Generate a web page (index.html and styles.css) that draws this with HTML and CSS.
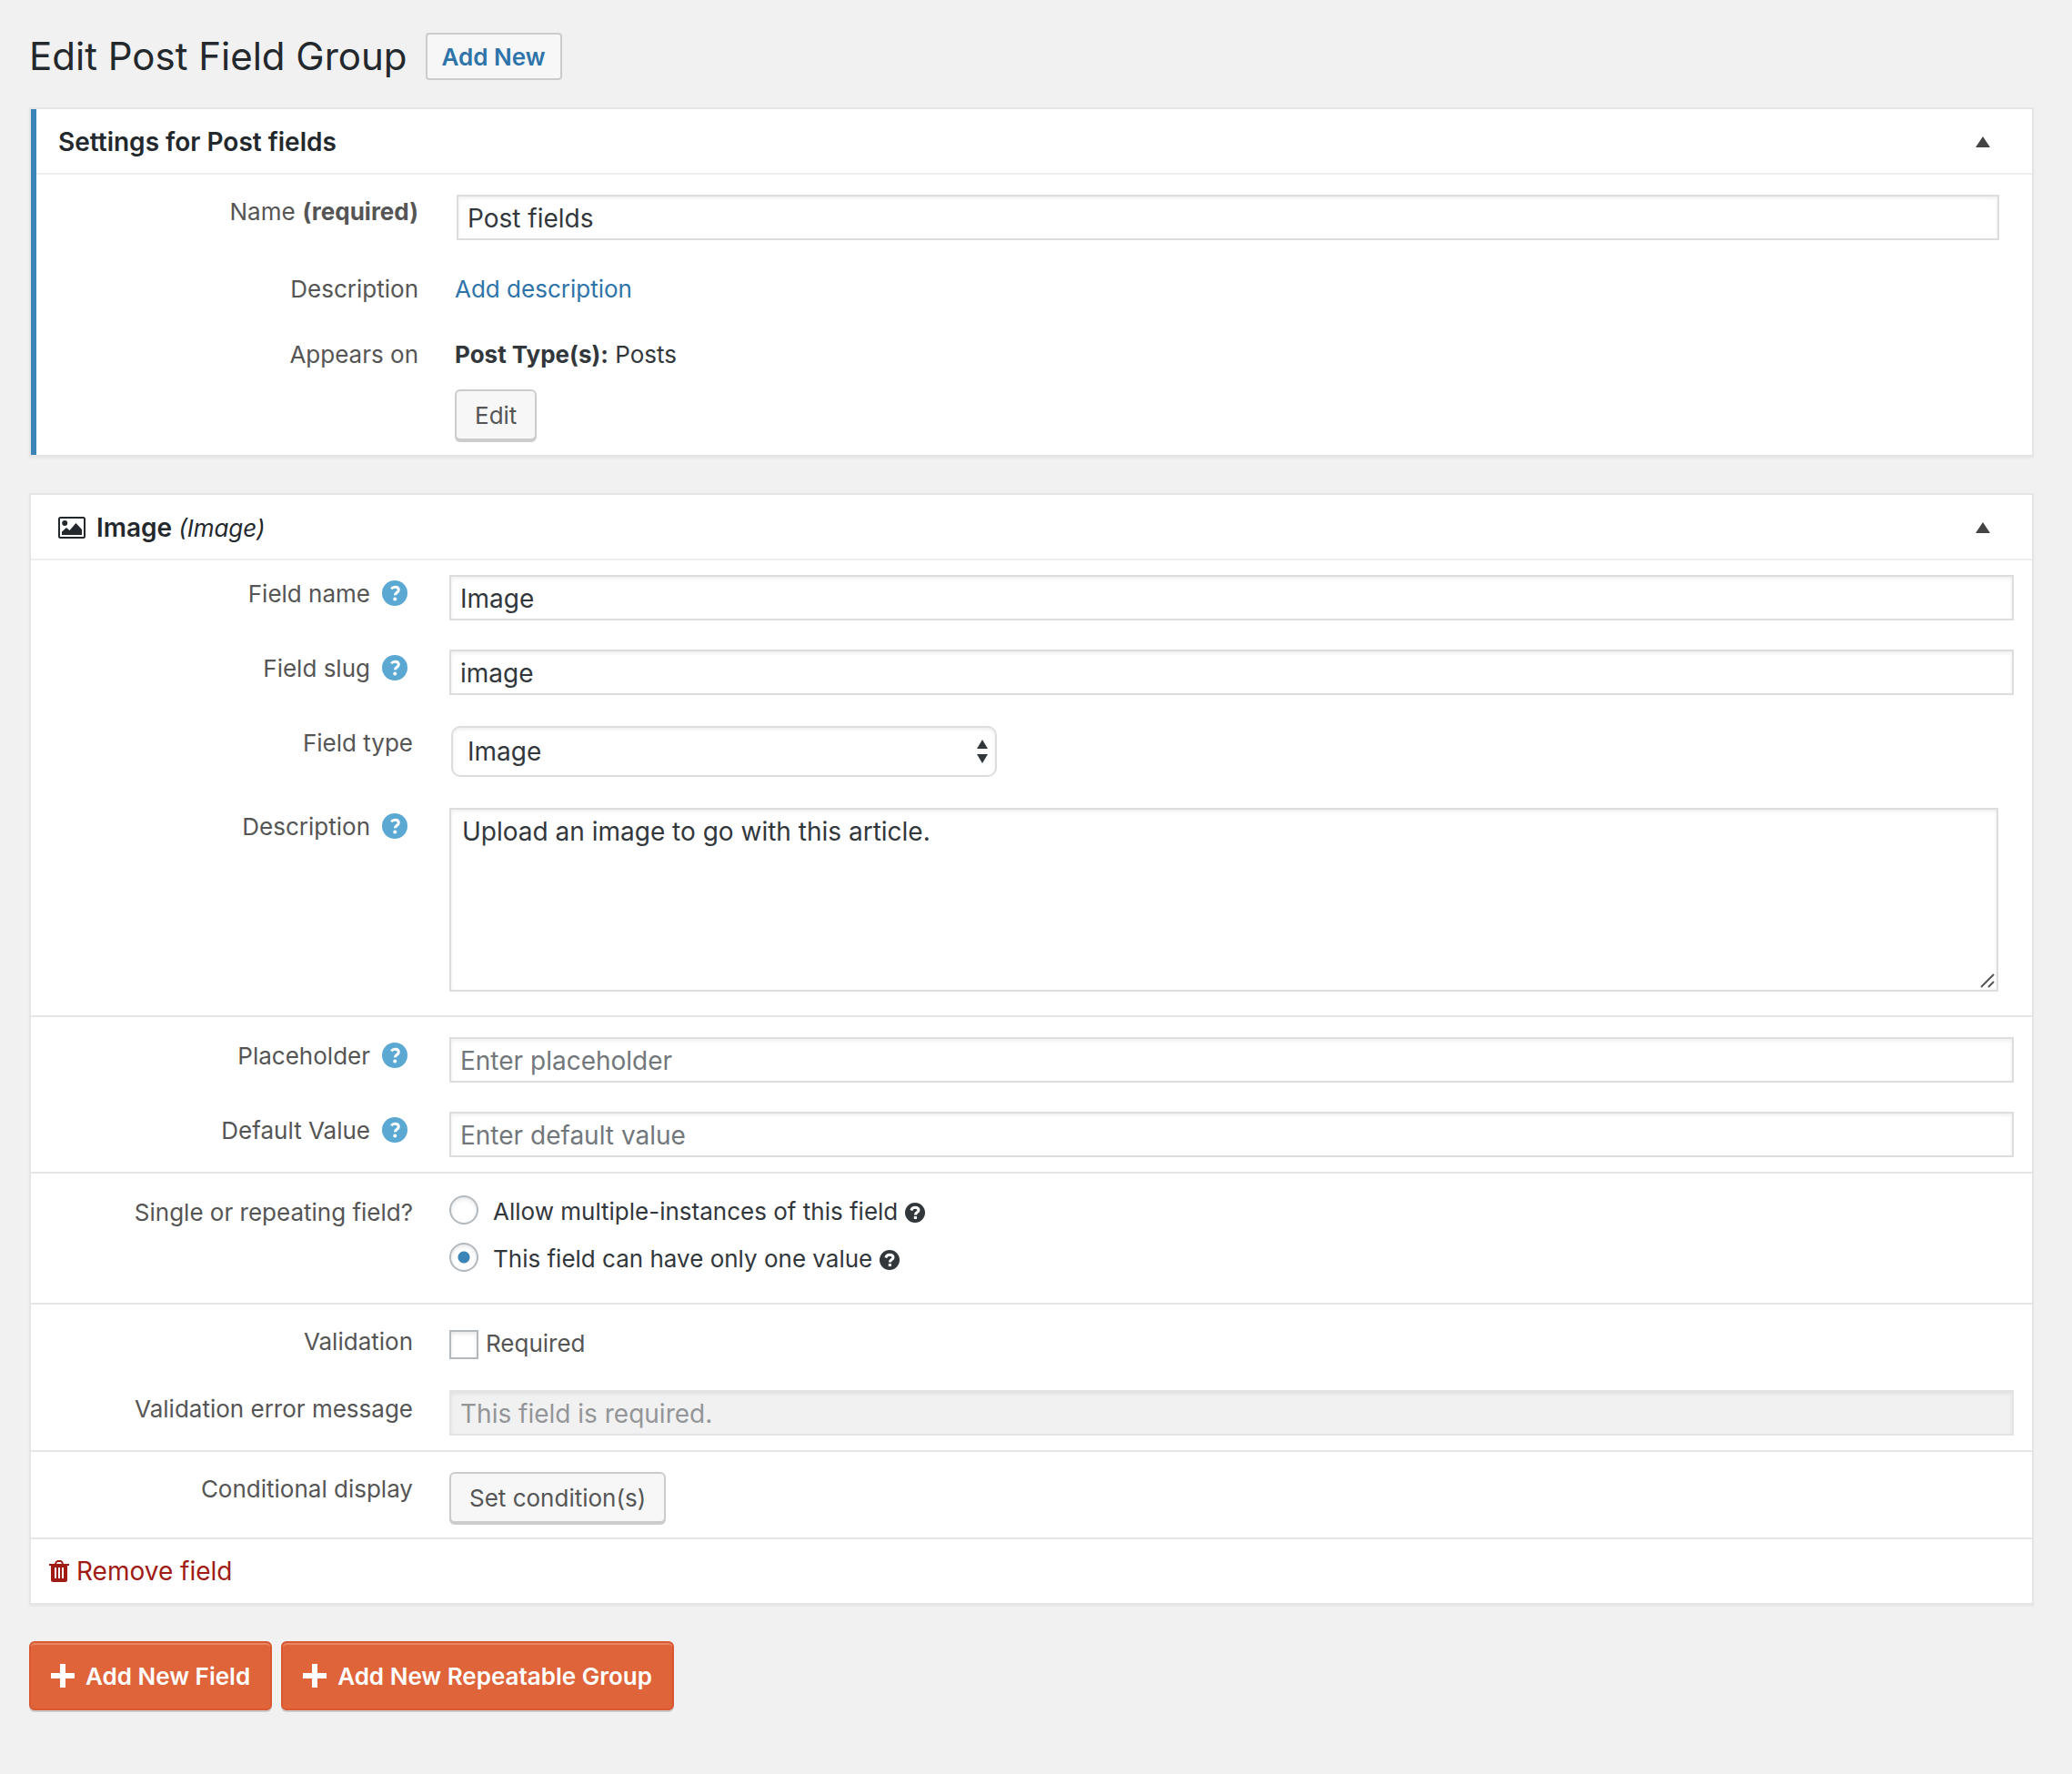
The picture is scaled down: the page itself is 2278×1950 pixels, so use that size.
FILE: index.html
```html
<!DOCTYPE html>
<html lang="en">
<head>
    <meta charset="UTF-8">
    <meta name="viewport" content="width=device-width, initial-scale=1.0">
    <title>Edit Post Field Group</title>
    <link rel="stylesheet" href="styles.css">
</head>
<body>

<!-- Shared icons -->
<svg class="icon-defs" width="0" height="0" aria-hidden="true">
    <symbol id="icon-help" viewBox="0 0 28 28">
        <circle cx="14" cy="14" r="14"/>
        <path d="M10.2 9.2C11.6 7.6 13 7.2 14.4 7.2C16.8 7.2 18.3 8.5 18.3 10.4C18.3 13.2 14.4 13.2 14.4 16.2" fill="none" stroke="#fff" stroke-width="3"/>
        <circle cx="14.2" cy="20.6" r="2" fill="#fff"/>
    </symbol>
    <symbol id="icon-help-dark" viewBox="0 0 22 22">
        <circle cx="11" cy="11" r="11"/>
        <path d="M6.8 8.4C7.6 6.2 9.2 5.2 11 5.2C13.4 5.2 15 6.5 15 8.2C15 10.8 11.4 10.4 11.4 13.6" fill="none" stroke="#fff" stroke-width="3"/>
        <path d="M9.8 15H13V18H9.8Z" fill="#fff"/>
    </symbol>
    <symbol id="icon-toggle" viewBox="0 0 16 12">
        <path d="M8 0L16 12H0Z"/>
    </symbol>
    <symbol id="icon-plus" viewBox="0 0 26 26">
        <path d="M10 0H16V10H26V16H16V26H10V16H0V10H10Z"/>
    </symbol>
</svg>

<form class="wrap">
    <header class="page-header">
        <h1>Edit Post Field Group</h1>
        <a href="#" class="page-title-action">Add New</a>
    </header>

    <!-- Group settings -->
    <section class="postbox postbox-settings">
        <div class="postbox-header">
            <h2>Settings for Post fields</h2>
            <button type="button" class="toggle" aria-label="Toggle panel"><svg width="16" height="12"><use href="#icon-toggle"/></svg></button>
        </div>
        <div class="settings">
            <div class="row">
                <label class="row-label" for="group-name">Name <strong>(required)</strong></label>
                <div class="row-control"><input type="text" id="group-name" class="text-input group-name" value="Post fields"></div>
            </div>
            <div class="row">
                <span class="row-label">Description</span>
                <div class="row-control"><a href="#">Add description</a></div>
            </div>
            <div class="row">
                <span class="row-label">Appears on</span>
                <div class="row-control">
                    <p><strong>Post Type(s):</strong> Posts</p>
                    <button type="button" class="button">Edit</button>
                </div>
            </div>
        </div>
    </section>

    <!-- Image field -->
    <section class="postbox">
        <div class="postbox-header">
            <svg class="field-icon" width="30" height="24" viewBox="0 0 30 24">
                <rect x="1" y="1" width="28" height="22" rx="1.5" fill="none" stroke="#23282d" stroke-width="2"/>
                <circle cx="7.2" cy="7" r="3"/>
                <path d="M4 20V16.5L9 12L12.5 15L19.5 7L26 14V20Z"/>
            </svg>
            <h2>Image <em>(Image)</em></h2>
            <button type="button" class="toggle" aria-label="Toggle panel"><svg width="16" height="12"><use href="#icon-toggle"/></svg></button>
        </div>

        <div class="fieldset fieldset-main">
            <div class="row">
                <label class="row-label" for="field-name">Field name <svg class="help"><use href="#icon-help"/></svg></label>
                <input type="text" id="field-name" class="text-input" value="Image">
            </div>
            <div class="row">
                <label class="row-label" for="field-slug">Field slug <svg class="help"><use href="#icon-help"/></svg></label>
                <input type="text" id="field-slug" class="text-input" value="image">
            </div>
            <div class="row">
                <label class="row-label" for="field-type">Field type</label>
                <div class="select-wrap">
                    <select id="field-type">
                        <option>Image</option>
                    </select>
                    <svg class="select-arrows" width="14" height="26" viewBox="0 0 14 26">
                        <path d="M7 0L13 10H1ZM7 26L13 16H1Z"/>
                    </svg>
                </div>
            </div>
            <div class="row">
                <label class="row-label" for="field-description">Description <svg class="help"><use href="#icon-help"/></svg></label>
                <div class="textarea-wrap">
                    <textarea id="field-description">Upload an image to go with this article.</textarea>
                    <svg class="resize-grip" width="16" height="16" viewBox="0 0 16 16">
                        <path d="M1 15L15 1M9 15L15 9"/>
                    </svg>
                </div>
            </div>
        </div>

        <div class="fieldset">
            <div class="row">
                <label class="row-label" for="field-placeholder">Placeholder <svg class="help"><use href="#icon-help"/></svg></label>
                <input type="text" id="field-placeholder" class="text-input" placeholder="Enter placeholder">
            </div>
            <div class="row">
                <label class="row-label" for="field-default">Default Value <svg class="help"><use href="#icon-help"/></svg></label>
                <input type="text" id="field-default" class="text-input" placeholder="Enter default value">
            </div>
        </div>

        <div class="fieldset fieldset-repeat">
            <div class="row">
                <span class="row-label" id="repeat-label">Single or repeating field?</span>
                <div class="options" role="radiogroup" aria-labelledby="repeat-label">
                    <label class="option"><input type="radio" name="repeat"> Allow multiple-instances of this field <svg class="help-dark"><use href="#icon-help-dark"/></svg></label>
                    <label class="option"><input type="radio" name="repeat" checked> This field can have only one value <svg class="help-dark"><use href="#icon-help-dark"/></svg></label>
                </div>
            </div>
        </div>

        <div class="fieldset fieldset-validation">
            <div class="row">
                <span class="row-label">Validation</span>
                <div class="options">
                    <label class="option option-check"><input type="checkbox"> Required</label>
                </div>
            </div>
            <div class="row">
                <label class="row-label" for="field-error">Validation error message</label>
                <input type="text" id="field-error" class="text-input" value="This field is required." disabled>
            </div>
        </div>

        <div class="fieldset">
            <div class="row row-button">
                <span class="row-label">Conditional display</span>
                <div><button type="button" class="button">Set condition(s)</button></div>
            </div>
        </div>

        <div class="postbox-footer">
            <a href="#" class="remove">
                <svg width="22" height="24" viewBox="0 0 22 24">
                    <path d="M0 4H6L7 1.5L9 0H13L15 1.5L16 4H22V6H20V21.5Q20 24 17.5 24H4.500Q2 24 2 21.500V6H0ZM8 4H14L13 2H9ZM6 8V20H8V8ZM10 8V20H12V8ZM14 8V20H16V8Z" fill-rule="evenodd"/>
                </svg>
                Remove field
            </a>
        </div>
    </section>

    <div class="actions">
        <button type="button" class="button-primary"><svg width="26" height="26"><use href="#icon-plus"/></svg>Add New Field</button>
        <button type="button" class="button-primary"><svg width="26" height="26"><use href="#icon-plus"/></svg>Add New Repeatable Group</button>
    </div>
</form>

</body>
</html>
```
FILE: styles.css
```css
* {
    box-sizing: border-box;
}
body {
    margin: 0;
    background: #f1f1f1;
    color: #32373c;
    font-family: Inter, "Liberation Sans", sans-serif;
    font-size: 26px;
    line-height: 36px;
}
h1, h2, p {
    margin: 0;
}
a {
    color: #2e74a9;
    text-decoration: none;
}
strong {
    font-weight: 700;
}
input, select, textarea, button {
    font-family: inherit;
    margin: 0;
}
.icon-defs {
    display: block;
}
.wrap {
    padding: 36px 42px 68px 32px;
}

/* Page title */
.page-header {
    display: flex;
    align-items: center;
    gap: 20px;
    margin-bottom: 30px;
}
h1 {
    font-size: 42px;
    font-weight: 400;
    line-height: 52px;
    color: #23282d;
}
.page-title-action {
    padding: 7px 16px 5px;
    border: 2px solid #ccc;
    border-radius: 4px;
    background: #f7f7f7;
    font-weight: 600;
}

/* Panels */
.postbox {
    margin-bottom: 40px;
    border: 2px solid #e5e5e5;
    background: #fff;
    box-shadow: 0 2px 2px rgba(0, 0, 0, 0.04);
}
.postbox-settings {
    position: relative;
}
.postbox-settings::before {
    content: "";
    position: absolute;
    top: 0;
    bottom: 0;
    left: 0;
    width: 6px;
    background: #3a84b7;
}
.postbox-header {
    display: flex;
    align-items: center;
    gap: 12px;
    height: 72px;
    padding: 2px 46px 0 30px;
    border-bottom: 2px solid #eee;
    color: #23282d;
}
.postbox-header h2 {
    font-size: 28px;
    font-weight: 600;
}
.postbox-header em {
    font-size: 26px;
    font-weight: 400;
}
.field-icon {
    fill: #23282d;
}
.toggle {
    display: flex;
    margin-left: auto;
    padding: 0;
    border: 0;
    background: none;
    fill: #444;
    cursor: pointer;
}

/* Form rows */
.row {
    display: grid;
    grid-template-columns: 420px 1fr;
    column-gap: 40px;
    align-items: start;
}
.row-label {
    display: flex;
    justify-content: flex-end;
    gap: 8px;
    padding-top: 3px;
    color: #555;
}
.help {
    width: 28px;
    height: 28px;
    margin: 3px 6px 0 5px;
    fill: #5ba9d3;
}
.settings {
    display: grid;
    row-gap: 35px;
    padding: 22px 36px 16px 6px;
}
.settings .row-label,
.settings .row-control {
    padding-top: 1px;
}
.settings .row:first-child .row-control {
    padding: 0 0 0 2px;
}
.settings p {
    margin-bottom: 20px;
}
.fieldset {
    display: grid;
    row-gap: 32px;
    padding: 22px 20px 16px 0;
    border-bottom: 2px solid #e5e5e5;
}
.fieldset-main {
    padding-top: 16px;
    padding-bottom: 26px;
}
.fieldset-repeat {
    padding-bottom: 30px;
}
.fieldset-validation {
    padding-top: 20px;
}
.row-button .row-label {
    padding-top: 1px;
}

/* Controls */
.text-input, textarea, select {
    display: block;
    width: 100%;
    border: 2px solid #ddd;
    background: #fff;
    box-shadow: inset 0 2px 4px rgba(0, 0, 0, 0.07);
    color: #32373c;
    font-size: 28px;
}
.text-input {
    height: 50px;
    padding: 2px 10px 0;
}
.text-input::placeholder {
    color: #72777c;
    opacity: 1;
}
.text-input:disabled {
    border-color: #e3e3e3;
    background: #f1f1f1;
    color: #939598;
}
.select-wrap {
    position: relative;
    width: 600px;
    margin: 2px;
}
select {
    height: 56px;
    padding: 0 44px 0 16px;
    border-radius: 10px;
    appearance: none;
}
.select-arrows {
    position: absolute;
    top: 15px;
    right: 9px;
    fill: #32373c;
    pointer-events: none;
}
.textarea-wrap {
    position: relative;
    width: 99%;
}
textarea {
    height: 202px;
    padding: 4px 12px;
    line-height: 40px;
    resize: none;
}
.resize-grip {
    position: absolute;
    right: 4px;
    bottom: 4px;
    fill: none;
    stroke: #555;
    stroke-width: 2;
}
.options {
    display: grid;
    row-gap: 16px;
    padding-top: 2px;
}
.option {
    display: flex;
    align-items: flex-start;
}
.option input {
    appearance: none;
    width: 32px;
    height: 32px;
    margin-right: 16px;
    border: 2px solid #b4b9be;
    background: #fff;
    box-shadow: inset 0 2px 4px rgba(0, 0, 0, 0.1);
}
.option input[type="radio"] {
    border-radius: 50%;
}
.option input[type="radio"]:checked {
    background: radial-gradient(circle, #3a84b7 6px, #fff 7px);
}
.option-check {
    padding: 3px 0 1px;
    color: #555;
}
.option-check input {
    margin-top: 3px;
    margin-right: 8px;
}
.help-dark {
    width: 22px;
    height: 22px;
    margin: 8px 0 0 8px;
    fill: #32373c;
}
.button {
    display: block;
    height: 56px;
    padding: 0 20px;
    border: 2px solid #ccc;
    border-radius: 6px;
    background: #f7f7f7;
    box-shadow: 0 2px 0 #ccc;
    color: #555;
    font-size: 26px;
    cursor: pointer;
}

/* Footer and actions */
.postbox-footer {
    display: flex;
    padding: 17px 20px;
    font-size: 28px;
}
.remove {
    display: flex;
    align-items: center;
    gap: 8px;
    color: #a01b14;
    fill: #a01b14;
}
.actions {
    display: flex;
    gap: 10px;
}
.button-primary {
    display: flex;
    align-items: center;
    gap: 12px;
    height: 76px;
    padding: 0 22px;
    border: 2px solid #d95731;
    border-radius: 6px;
    background: #df643a;
    box-shadow: inset 0 2px 0 #ea8562, 0 2px 0 #ccc;
    color: #fff;
    fill: #fff;
    font-size: 26px;
    font-weight: 600;
    cursor: pointer;
}
```
